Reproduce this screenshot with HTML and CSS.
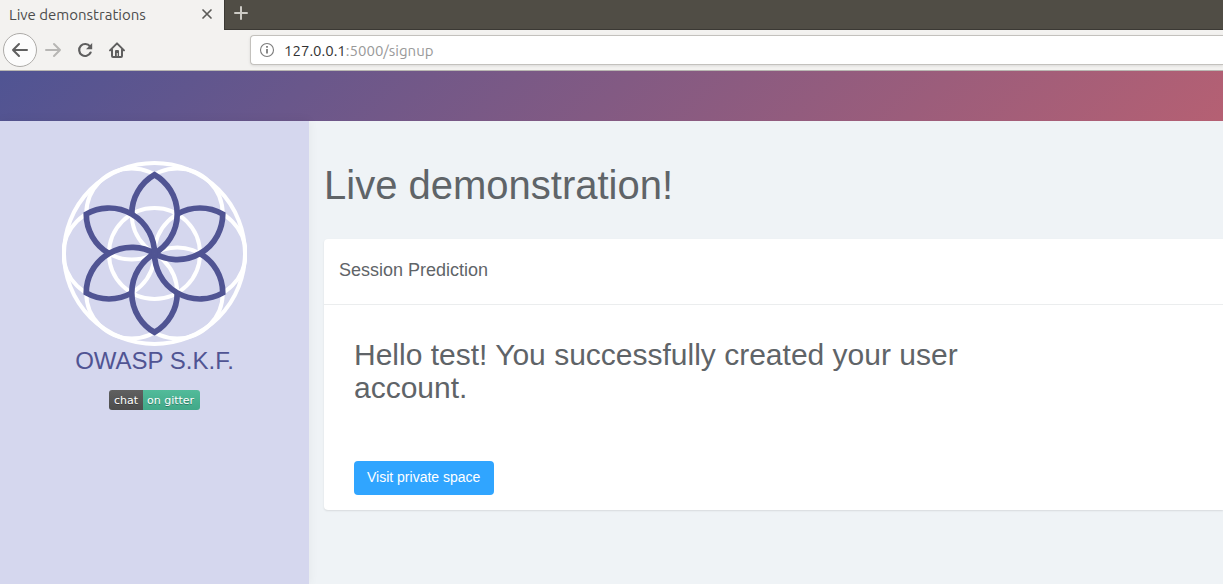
FILE: index.html
```html
<!DOCTYPE html>
<html lang="en">
<head>
<meta charset="utf-8">
<title>Live demonstrations</title>
<link rel="stylesheet" href="styles.css">
</head>
<body>
<div class="browser">
  <div class="tabs">
    <div class="tab">
      <span class="tab-title">Live demonstrations</span>
      <button class="icon-button" type="button" aria-label="Close tab">
        <svg width="16" height="16" viewBox="0 0 16 16" fill="none" stroke="#5c5b58" stroke-width="1.7" stroke-linecap="round"><path d="M4 4l8 8M12 4l-8 8"/></svg>
      </button>
    </div>
    <button class="icon-button new-tab" type="button" aria-label="New tab">
      <svg width="16" height="16" viewBox="0 0 16 16" fill="none" stroke="#cdcbc5" stroke-width="2" stroke-linecap="round"><path d="M8 2v12M2 8h12"/></svg>
    </button>
  </div>
  <div class="toolbar">
    <div class="nav">
      <button class="icon-button back" type="button" aria-label="Back">
        <svg width="18" height="18" viewBox="0 0 18 18" fill="none" stroke="#5f5f5f" stroke-width="2" stroke-linecap="round" stroke-linejoin="round"><path d="M16 9H2M8 3L2 9l6 6"/></svg>
      </button>
      <button class="icon-button" type="button" aria-label="Forward">
        <svg width="18" height="18" viewBox="0 0 18 18" fill="none" stroke="#b7b6b4" stroke-width="2" stroke-linecap="round" stroke-linejoin="round"><path d="M2 9h14M10 3l6 6-6 6"/></svg>
      </button>
      <button class="icon-button" type="button" aria-label="Reload">
        <svg width="18" height="18" viewBox="0 0 18 18" fill="none" stroke="#5f5f5f" stroke-width="2.2" stroke-linecap="round"><path d="M14.6 11.6A6 6 0 1 1 14 5.4"/><path d="M16.2 2v6.2H10z" fill="#5f5f5f" stroke="none"/></svg>
      </button>
      <button class="icon-button" type="button" aria-label="Home">
        <svg width="18" height="18" viewBox="0 0 18 18" fill="none" stroke="#5f5f5f" stroke-width="2" stroke-linecap="round" stroke-linejoin="round"><path d="M2 9.4L9 2.4l7 7M4 8.5V15q0 1 1 1h8q1 0 1-1V8.5"/><path d="M7 15.5V10q0-1 1-1h2q1 0 1 1v5.5H9.700v-3.500H8.800v3.500z" fill="#5f5f5f" stroke="none"/></svg>
      </button>
    </div>
    <div class="address">
      <svg width="16" height="16" viewBox="0 0 16 16" fill="none" stroke="#7c7c7c" aria-hidden="true"><circle cx="8" cy="8" r="6.5" stroke-width="1.1"/><path d="M8 7v4.5M8 4v1.7" stroke-width="1.8"/></svg>
      <div class="url" role="textbox" contenteditable="true" spellcheck="false" aria-label="Address"><span class="host">127.0.0.1</span>:5000/signup</div>
    </div>
  </div>
</div>
<header class="banner"></header>
<div class="layout">
  <aside class="sidebar">
    <svg class="logo" width="185" height="186" viewBox="-92.5 -92.5 185 186" fill="none" aria-hidden="true">
      <defs>
        <g id="petal"><path d="M-22.75-39.4A45.5 45.5 0 0 1 0-78.8A45.5 45.5 0 0 1 0 0"/></g>
      </defs>
      <g stroke="#fff" stroke-width="4">
        <circle r="90.5"/><circle r="45.5"/>
        <circle cx="45.5" r="45.5"/><circle cx="-45.5" r="45.5"/>
        <circle cx="22.75" cy="39.4" r="45.5"/><circle cx="-22.75" cy="39.4" r="45.5"/>
        <circle cx="22.75" cy="-39.4" r="45.5"/><circle cx="-22.75" cy="-39.4" r="45.5"/>
      </g>
      <g stroke="#505493" stroke-width="5.7">
        <use href="#petal"/><use href="#petal" transform="rotate(60)"/><use href="#petal" transform="rotate(120)"/>
        <use href="#petal" transform="rotate(180)"/><use href="#petal" transform="rotate(240)"/><use href="#petal" transform="rotate(300)"/>
      </g>
    </svg>
    <div class="brand">OWASP S.K.F.</div>
    <a class="badge" href="#gitter"><span class="badge-left">chat</span><span class="badge-right">on gitter</span></a>
  </aside>
  <main class="content">
    <h1 class="title">Live demonstration!</h1>
    <section class="card">
      <h2 class="card-header">Session Prediction</h2>
      <div class="card-body">
        <p class="message">Hello test! You successfully created your user account.</p>
        <button class="primary" type="button">Visit private space</button>
      </div>
    </section>
  </main>
</div>
</body>
</html>
```
FILE: styles.css
```css
* { box-sizing: border-box; }
body {
  margin: 0;
  min-height: 100vh;
  display: flex;
  flex-direction: column;
  overflow-x: hidden;
  background: #eff3f6;
  color: #5f6468;
  font-family: "Liberation Sans", Arial, sans-serif;
}
.browser {
  font-family: Ubuntu, "Noto Sans", sans-serif;
  background: #f3f2f0;
  border-bottom: 1px solid #b9b7b2;
}
.icon-button {
  display: flex;
  align-items: center;
  justify-content: center;
  padding: 0;
  border: 0;
  background: none;
}
.tabs {
  display: flex;
  height: 30px;
  background: #504d45;
}
.tab {
  display: flex;
  align-items: center;
  justify-content: space-between;
  width: 224px;
  padding: 0 9px 2px;
  background: #f3f2f0;
}
.tab-title { font-size: 15px; color: #4c4c4c; }
.new-tab {
  flex: 1;
  justify-content: flex-start;
  padding: 0 9px 4px 8px;
  border-left: 1px solid #3b3934;
  border-bottom: 1px solid #3b3934;
}
.toolbar {
  display: flex;
  align-items: center;
  height: 40px;
}
.nav {
  display: flex;
  align-items: center;
  gap: 14px;
  width: 250px;
  padding-left: 3px;
}
.back {
  width: 34px;
  height: 34px;
  margin-right: -7px;
  border: 1px solid #adaba8;
  border-radius: 50%;
  background: #fcfcfc;
}
.address {
  flex: 1;
  display: flex;
  align-items: center;
  gap: 9px;
  height: 30px;
  padding-left: 8px;
  border: 1px solid #c3c1bd;
  border-right: 0;
  border-radius: 4px 0 0 4px;
  background: #fff;
  box-shadow: 0 1px 3px rgba(0, 0, 0, 0.1);
}
.url {
  flex: 1;
  font-size: 15px;
  color: #999;
}
.host { color: #333; }
.banner {
  height: 50px;
  background: linear-gradient(135deg, #505493, #b56073);
}
.layout { flex: 1; display: flex; }
.sidebar {
  flex: none;
  display: flex;
  flex-direction: column;
  align-items: center;
  width: 309px;
  padding-top: 40px;
  background: #d5d7ee;
  box-shadow: 0 0 10px rgba(0, 0, 0, 0.06);
}
.brand {
  font-size: 24px;
  line-height: 28px;
  color: #505493;
}
.badge {
  display: flex;
  height: 20px;
  margin-top: 15px;
  border-radius: 3px;
  overflow: hidden;
  color: #fff;
  font: 11px/21px "DejaVu Sans", sans-serif;
  text-decoration: none;
  text-shadow: 0 1px 0 rgba(1, 1, 1, 0.3);
}
.badge-left { padding: 0 5px; background: linear-gradient(#606060, #4c4c4c); }
.badge-right { padding: 0 6px 0 4px; background: linear-gradient(#52bb9a, #41a888); }
.content { flex: 1; padding: 40px 0 40px 15px; }
.title {
  margin: 0 0 30px;
  font-size: 40px;
  font-weight: 400;
  line-height: 48px;
}
.card {
  border-radius: 4px 0 0 4px;
  background: #fff;
  box-shadow: 0 1px 2px rgba(0, 0, 0, 0.1);
}
.card-header {
  margin: 0;
  padding: 21px 15px 23px;
  border-bottom: 1px solid #ebedee;
  font-size: 18px;
  font-weight: 400;
  line-height: 21px;
}
.card-body { padding: 33px 30px 15px; }
.message {
  max-width: 640px;
  margin: 0 0 57px;
  font-size: 30px;
  line-height: 33px;
}
.primary {
  display: block;
  height: 34px;
  padding: 0 14px 2px 13px;
  border: 0;
  border-radius: 4px;
  background: #30a5ff;
  color: #fff;
  font: 14px/20px "Liberation Sans", Arial, sans-serif;
}
```
